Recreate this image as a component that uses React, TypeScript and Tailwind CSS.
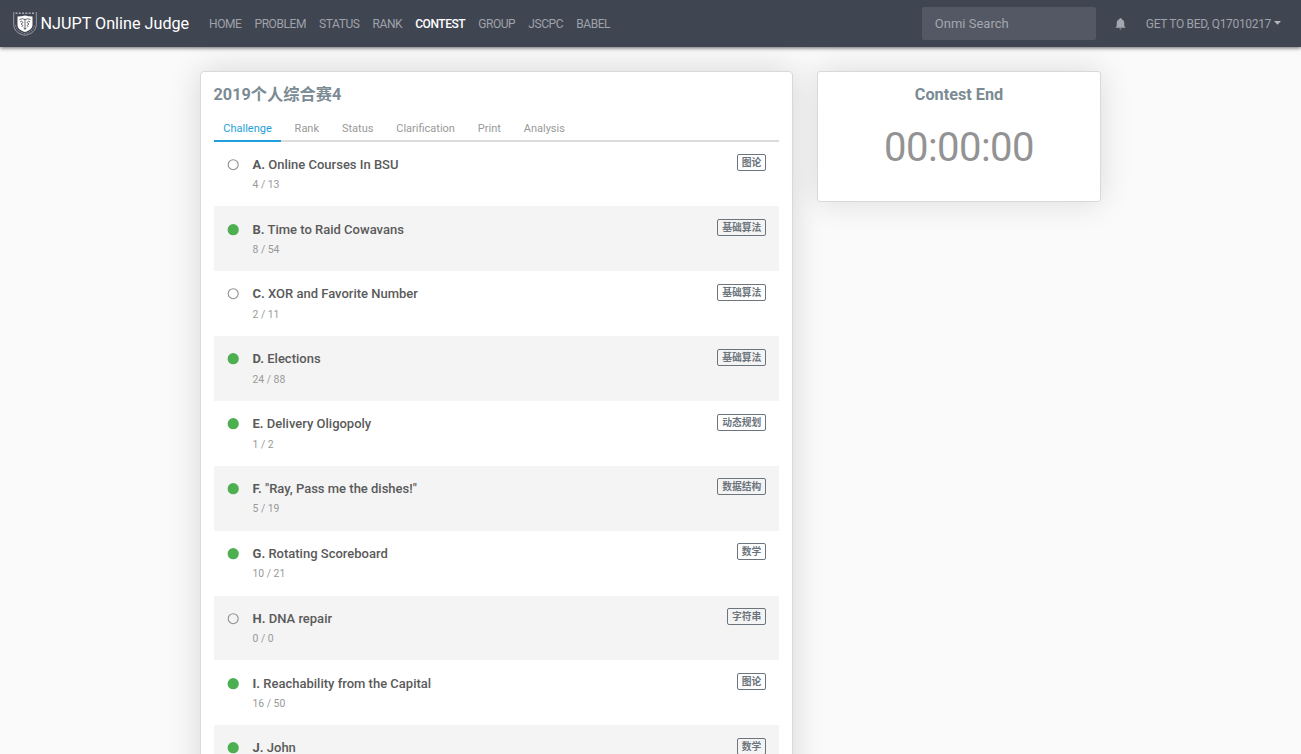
import React from "react";

const problems = [
  { id: "A", title: "Online Courses In BSU", stat: "4 / 13", tag: "图论", solved: false },
  { id: "B", title: "Time to Raid Cowavans", stat: "8 / 54", tag: "基础算法", solved: true },
  { id: "C", title: "XOR and Favorite Number", stat: "2 / 11", tag: "基础算法", solved: false },
  { id: "D", title: "Elections", stat: "24 / 88", tag: "基础算法", solved: true },
  { id: "E", title: "Delivery Oligopoly", stat: "1 / 2", tag: "动态规划", solved: true },
  { id: "F", title: "\"Ray, Pass me the dishes!\"", stat: "5 / 19", tag: "数据结构", solved: true },
  { id: "G", title: "Rotating Scoreboard", stat: "10 / 21", tag: "数学", solved: true },
  { id: "H", title: "DNA repair", stat: "0 / 0", tag: "字符串", solved: false },
  { id: "I", title: "Reachability from the Capital", stat: "16 / 50", tag: "图论", solved: true },
  { id: "J", title: "John", stat: "", tag: "数学", solved: true },
];

const navItems = ["HOME", "PROBLEM", "STATUS", "RANK", "CONTEST", "GROUP", "JSCPC", "BABEL"];
const tabs = ["Challenge", "Rank", "Status", "Clarification", "Print", "Analysis"];

function Crest() {
  return (
    <svg className="h-[25px] w-6 shrink-0" viewBox="0 0 24 25" fill="none" stroke="#fff">
      <path d="M.7 1v12.500c0 6 5 9.800 11.300 10.800 6.300-1 11.300-4.800 11.300-10.800V1" strokeWidth=".7" opacity=".65" />
      <path d="M2.500 2.300h19" strokeWidth="1.400" strokeDasharray="2 1.300" opacity=".55" />
      <path d="M2.500 14c.5 4.500 4.500 7.500 9.500 8.700 5-1.200 9-4.200 9.500-8.700" strokeWidth=".8" strokeDasharray="1.500 1" opacity=".5" />
      <path d="M4.500 5.500q4 0 7.500-1 3.500 1 7.500 1v8c0 4-3 6-7.500 7.500-4.500-1.500-7.500-3.500-7.500-7.500z" fill="#fff" stroke="none" />
      <path d="M6.500 8.500q2.700-1.500 5.500 0 2.800-1.500 5.500 0M12 8v10.500M7 11l1.500-1 1.500 1.500L8 13l2 1.500L8.500 16M17 11l-1.500-1-1.500 1.500 2 1.500-2 1.500 1.500 1.500M10.500 17l1.500 1 1.500-1" stroke="#404552" strokeWidth=".8" />
    </svg>
  );
}

function ProblemRow({ p }: { p: (typeof problems)[number] }) {
  return (
    <li className="flex h-[64.870px] items-start px-[13px] pt-[13.100px] even:bg-[#f4f4f4]">
      <svg className="mt-[3px] size-[13px] shrink-0" viewBox="0 0 13 13">
        {p.solved ? (
          <circle cx="6.200" cy="6.700" r="5.600" fill="#4caf50" />
        ) : (
          <circle cx="6.200" cy="6.700" r="5" fill="none" stroke="#8f8f8f" strokeWidth="1.100" />
        )}
      </svg>
      <div className="ml-[13px] flex-1">
        <h3 className="text-[13px] leading-[20px] font-medium text-[#5a5a5a]">
          <span className="font-bold">{p.id}.</span> {p.title}
        </h3>
        <p className="mt-[0.500px] text-[10.400px] leading-[20px] text-[#999]">{p.stat}</p>
      </div>
      <span className="-mt-[0.500px] rounded-[2px] border border-[#6c757d] px-[3.800px] text-[9.750px] leading-[15px] font-bold text-[#6c757d]">
        {p.tag}
      </span>
    </li>
  );
}

export default function App() {
  return (
    <div className="flex h-[754px] flex-col overflow-hidden bg-[#fafafa] font-['Roboto','Noto_Sans_CJK_SC',sans-serif]">
      <nav className="relative z-10 flex h-[47px] shrink-0 items-center bg-[#404552] px-[13px] shadow-[0_1px_4px_rgba(0,0,0,0.6)]">
        <a className="flex w-[177px] items-center gap-[3.500px] text-[16.200px] whitespace-nowrap text-white">
          <Crest />
          <span className="pt-px">NJUPT Online Judge</span>
        </a>
        <ul className="ml-[19px] flex gap-[13.100px] text-[12px] tracking-[-0.430px] text-[#9fa2a8]">
          {navItems.map((n) => (
            <li key={n} className={n === "CONTEST" ? "font-medium tracking-[-0.460px] text-white" : ""}>
              {n}
            </li>
          ))}
        </ul>
        <div className="ml-auto flex h-[33px] w-[174px] items-center rounded-[2px] bg-[#535864] px-[13px] text-[13px] text-[#a4a7ae]">
          Onmi Search
        </div>
        <svg className="ml-[18px] size-[13px]" viewBox="0 0 24 24" fill="#a4a7ae">
          <path d="M21 19v1H3v-1l2-2v-6c0-3.100 2.030-5.830 5-6.710V4a2 2 0 0 1 4 0v.29c2.970.88 5 3.610 5 6.710v6zm-7 2a2 2 0 0 1-4 0" />
        </svg>
        <span className="ml-[19px] text-[12px] tracking-[-0.330px] whitespace-nowrap text-[#9fa2a8]">GET TO BED, Q17010217</span>
        <svg className="mr-[7px] mb-[2px] ml-[3px] h-[4px] w-[7px]" viewBox="0 0 7 4" fill="#b5b7bc">
          <path d="M0 0h7L3.500 3.700z" />
        </svg>
      </nav>

      <main className="flex items-start gap-[24.500px] pt-[24px] pl-[200px]">
        <section className="w-[592.500px] shrink-0 rounded-[4px] border border-[#d9d9d9] bg-white px-[12.500px] pt-[12px] pb-[13px] shadow-[0_0_32px_rgba(0,0,0,0.15)]">
          <h1 className="text-[16.250px] leading-[22px] font-bold text-[#7b8b93]">2019个人综合赛4</h1>
          <div className="mt-[10.600px] flex h-[25px] border-b-2 border-[#dcdcdc] text-[11px] leading-[23px] text-[#999]">
            {tabs.map((t) => (
              <span
                key={t}
                className={
                  t === "Challenge"
                    ? "h-[25px] border-b-2 border-[#1e9fd9] px-[9.750px] text-[#1e9fd9]"
                    : "ml-[3.400px] px-[9.750px]"
                }
              >
                {t}
              </span>
            ))}
          </div>
          <ul>
            {problems.map((p) => (
              <ProblemRow key={p.id} p={p} />
            ))}
          </ul>
        </section>
        <aside className="h-[131px] w-[284px] rounded-[3px] border border-[#d9d9d9] bg-white pt-[12px] text-center shadow-[0_0_32px_rgba(0,0,0,0.13)]">
          <h2 className="text-[16.250px] leading-[22px] font-bold text-[#7b8b93]">Contest End</h2>
          <p className="mt-[18px] text-[40px] leading-[48px] tracking-[-0.550px] text-[#939393]">00:00:00</p>
        </aside>
      </main>
    </div>
  );
}
